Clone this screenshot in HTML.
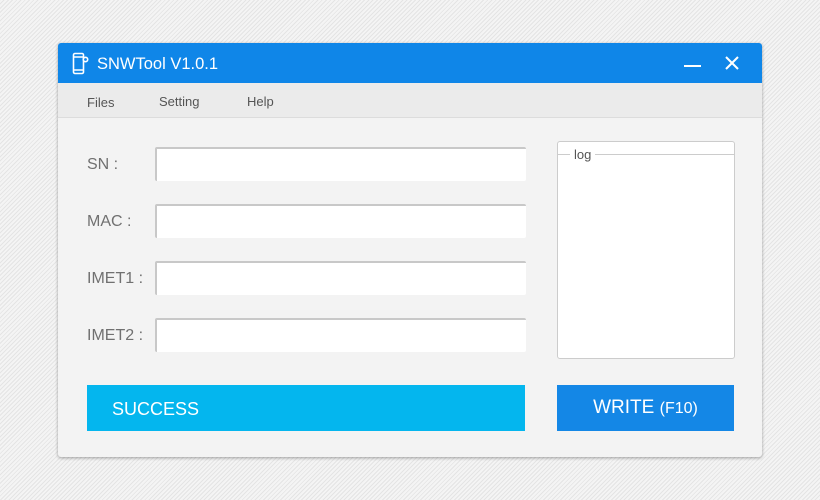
<!DOCTYPE html>
<html><head><style>
body{margin:0;width:820px;height:500px;overflow:hidden;font-family:"Liberation Sans",Arial,sans-serif;
background:repeating-linear-gradient(-45deg,#e4e4e4 0 1px,#f4f4f4 1px 3px);position:relative}
.win{position:absolute;left:58px;top:43px;width:704px;height:414px;background:#f3f3f3;border-radius:3px;box-shadow:0 1px 3px rgba(0,0,0,.35);overflow:hidden}
.title{position:absolute;left:0;top:0;width:704px;height:40px;background:#0f86e8;color:#fff;font-size:16.5px}
.title .t{position:absolute;left:39px;top:12px}
.menu{position:absolute;left:0;top:40px;width:704px;height:34px;background:#ebebeb;border-bottom:1px solid #dcdcdc;font-size:13px;color:#555}
.menu span{position:absolute;top:11px}
.lab{position:absolute;left:29px;font-size:16px;color:#707070}
.inp{position:absolute;left:97px;width:369px;height:32px;background:#fff;border-top:2px solid #c8c8c8;border-left:2px solid #c8c8c8;border-radius:2px}
.log{position:absolute;left:499px;top:98px;width:176px;height:216px;background:#fff;border:1px solid #ccc;border-radius:3px}
.log .l{position:absolute;left:0;right:0;top:12px;border-top:1px solid #ccc}
.log span{position:absolute;left:12px;top:5px;background:#fff;padding:0 4px;font-size:13px;color:#555}
.succ{position:absolute;left:29px;top:342px;width:438px;height:46px;background:#04b6ee;color:#fff;font-size:18px}
.write{position:absolute;left:499px;top:342px;width:177px;height:46px;background:#1487e6;color:#fff;font-size:19px;text-align:center;line-height:46px}
</style></head><body>
<div class="win">
<div class="title">
<svg style="position:absolute;left:14px;top:9px" width="18" height="24" viewBox="0 0 18 24" fill="none" stroke="#fff" stroke-width="1.6">
<rect x="1.5" y="1.5" width="10" height="20" rx="1.5"/><line x1="1.5" y1="5" x2="11.5" y2="5"/><line x1="1.5" y1="18" x2="11.5" y2="18"/>
<circle cx="13.5" cy="7.5" r="2.2" fill="#0f86e8"/></svg>
<span class="t">SNWTool V1.0.1</span>
<div style="position:absolute;left:626px;top:22px;width:17px;height:2px;background:#fff"></div>
<svg style="position:absolute;left:667px;top:13px" width="14" height="14" viewBox="0 0 14 14" stroke="#fff" stroke-width="2"><line x1="1" y1="1" x2="13" y2="13"/><line x1="13" y1="1" x2="1" y2="13"/></svg>
</div>
<div class="menu"><span style="left:29px;top:12px">Files</span><span style="left:101px">Setting</span><span style="left:189px">Help</span></div>
<div class="lab" style="top:113px">SN :</div><div class="inp" style="top:104px"></div>
<div class="lab" style="top:170px">MAC :</div><div class="inp" style="top:161px"></div>
<div class="lab" style="top:227px">IMET1 :</div><div class="inp" style="top:218px"></div>
<div class="lab" style="top:284px">IMET2 :</div><div class="inp" style="top:275px"></div>
<div class="log"><div class="l"></div><span>log</span></div>
<div class="succ"><span style="position:absolute;left:25px;top:14px">SUCCESS</span></div>
<div class="write">WRITE <span style="font-size:16px">(F10)</span></div>
</div>
</body></html>
